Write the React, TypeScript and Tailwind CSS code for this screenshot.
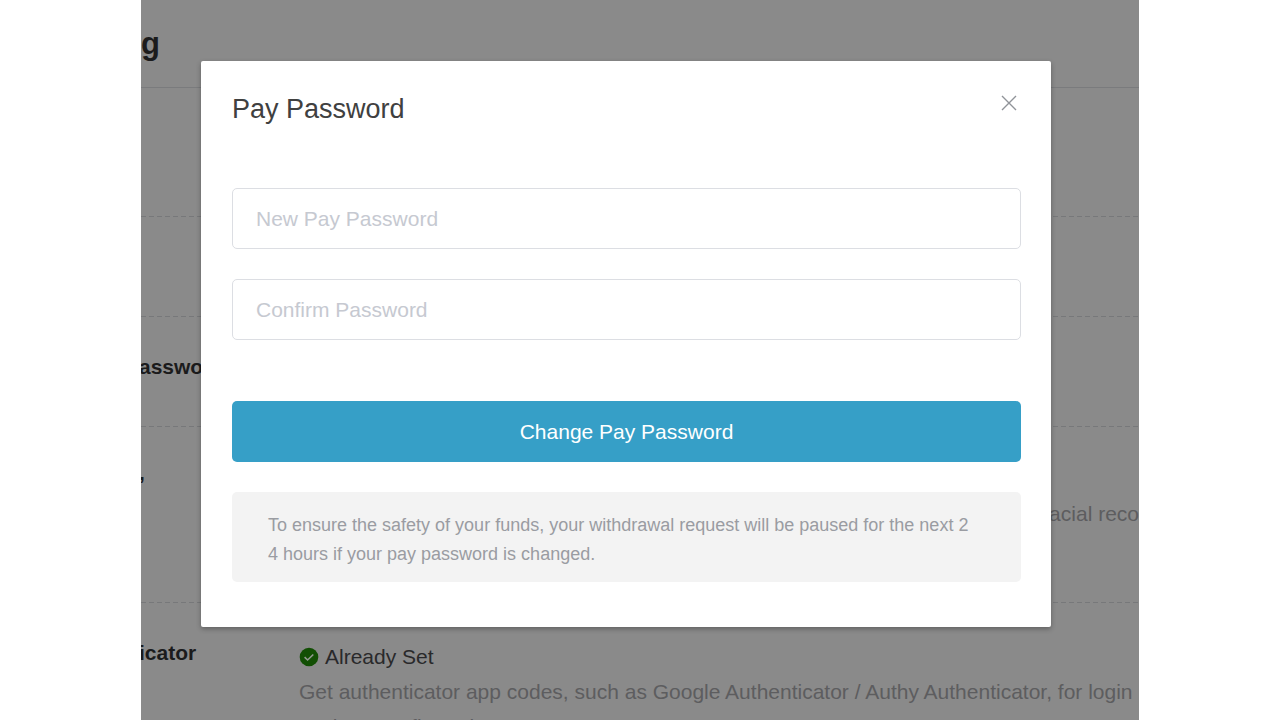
import { useState } from 'react';
import type { FormEvent, ReactNode } from 'react';

interface SettingRowProps {
    label?: string;
    className: string;
    contentClassName?: string;
    children?: ReactNode;
}

const SettingRow = ({ label, className, contentClassName = '', children }: SettingRowProps) => (
    <div className={`flex shrink-0 flex-col ${className}`}>
        <div className="flex min-h-0 flex-1">
            <div className="-ml-0.5 w-40 shrink-0 whitespace-nowrap font-bold text-[#1b1b1c]">{label}</div>
            <div className={`min-w-0 flex-1 ${contentClassName}`}>{children}</div>
        </div>
        {/* dashed divider */}
        <div className="h-px bg-[repeating-linear-gradient(90deg,#77787a_0_5px,transparent_5px_8px)]" />
    </div>
);

const CheckIcon = () => (
    <svg className="size-5" viewBox="0 0 20 20" aria-hidden="true">
        <circle cx="10" cy="10" r="9.3" fill="#124f04" />
        <path d="M5.6 10.2l3 2.8 5.7-5.5" fill="none" stroke="#939a91" strokeWidth="1.6" />
    </svg>
);

const CloseIcon = () => (
    <svg className="size-4" viewBox="0 0 16 16" aria-hidden="true">
        <path d="M1 1l14 14M15 1L1 15" fill="none" stroke="currentColor" strokeWidth="1.4" />
    </svg>
);

interface PasswordFieldProps {
    label: string;
    value: string;
    onChange: (value: string) => void;
}

const PasswordField = ({ label, value, onChange }: PasswordFieldProps) => (
    <input
        type="password"
        aria-label={label}
        placeholder={label}
        value={value}
        onChange={(e) => onChange(e.target.value)}
        className="block h-[61px] w-full rounded-[5px] border border-[#dcdee3] bg-white px-[23px] text-[21px] text-[#404040] outline-none placeholder:text-[#c6c9d1]"
    />
);

const PayPasswordDialog = () => {
    const [password, setPassword] = useState('');
    const [confirm, setConfirm] = useState('');

    const handleSubmit = (e: FormEvent) => {
        e.preventDefault();
    };

    return (
        <div
            role="dialog"
            aria-labelledby="dialog-title"
            className="w-full rounded-xs bg-white pt-[30px] pr-[30px] pb-[45px] pl-[31px] shadow-[0_2px_5px_rgba(0,0,0,0.3)]"
        >
            <div className="flex items-start justify-between">
                <h2 id="dialog-title" className="text-[27px] leading-9 text-[#404040]">Pay Password</h2>
                <button type="button" aria-label="Close" className="mt-1 mr-1 text-[#909399]">
                    <CloseIcon />
                </button>
            </div>

            <form onSubmit={handleSubmit} className="mt-[61px]">
                <div className="flex flex-col gap-[30px]">
                    <PasswordField label="New Pay Password" value={password} onChange={setPassword} />
                    <PasswordField label="Confirm Password" value={confirm} onChange={setConfirm} />
                </div>
                <button type="submit" className="mt-[61px] h-[61px] w-full rounded-[5px] bg-[#369fc7] text-[21px] text-white">
                    Change Pay Password
                </button>
            </form>

            <p className="mt-[30px] rounded-[5px] bg-[#f3f3f3] pt-[19px] pr-11 pb-[13px] pl-9 text-[18px] leading-[29px] break-all text-[#9a9ca2]">
                To ensure the safety of your funds, your withdrawal request will be paused for the next 24 hours if your pay password is changed.
            </p>
        </div>
    );
};

const App = () => {
    return (
        <div className="h-screen bg-white px-[141px] font-['Liberation_Sans',Arial,sans-serif]">
            <div className="relative h-full overflow-hidden bg-[#8a8a8a] text-[21px] leading-[35px]">
                {/* settings page behind the dialog */}
                <div className="flex flex-col">
                    <h1 className="h-[88px] shrink-0 border-b border-[#7a7b7d] pt-[26px] text-[31px] font-bold text-[#1b1b1c]">g</h1>
                    <SettingRow className="h-[129px]" />
                    <SettingRow className="h-[100px]" />
                    <SettingRow label="asswor" className="h-[110px] pt-8" />
                    <SettingRow label="," className="h-[176px] pt-7" contentClassName="pt-[41px]">
                        <p className="text-right text-[#5d5d5f]">acial reco</p>
                    </SettingRow>
                    <SettingRow label="icator" className="h-[180px] pt-8" contentClassName="pt-1">
                        <div className="flex items-center gap-1.5 text-[#29292b]">
                            <CheckIcon />
                            <span>Already Set</span>
                        </div>
                        <p className="whitespace-nowrap text-[#5d5d5f]">
                            Get authenticator app codes, such as Google Authenticator / Authy Authenticator, for login
                            <br />
                            settings configuration
                        </p>
                    </SettingRow>
                </div>

                <div className="absolute inset-0 pt-[61px] pr-[88px] pl-[60px]">
                    <PayPasswordDialog />
                </div>
            </div>
        </div>
    );
};

export default App;
